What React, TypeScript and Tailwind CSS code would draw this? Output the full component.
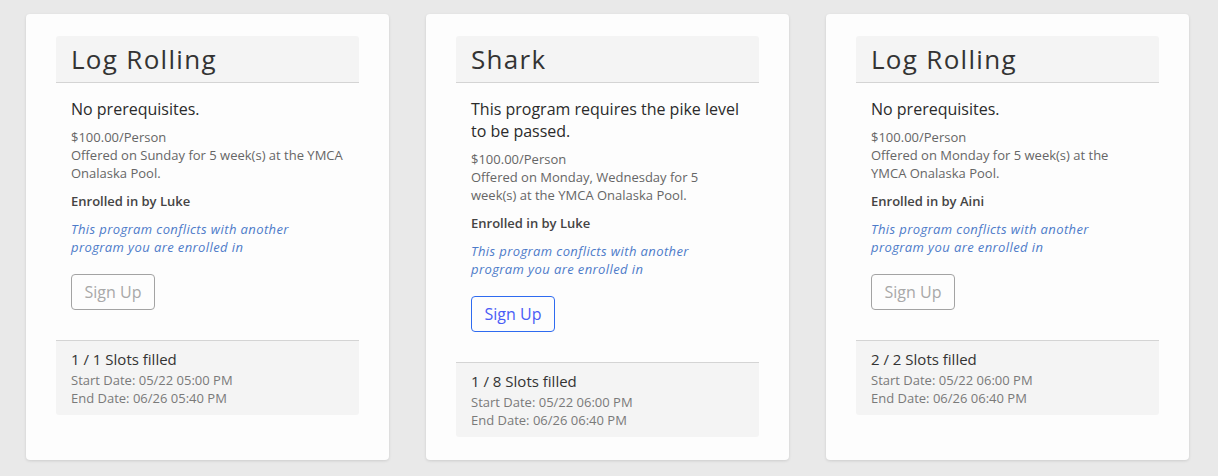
import React from "react";

interface Program {
  title: string;
  prereq: string[];
  days: string[];
  enrolledBy: string;
  slots: string;
  start: string;
  end: string;
  canSignUp: boolean;
}

const programs: Program[] = [
  {
    title: "Log Rolling",
    prereq: ["No prerequisites."],
    days: ["Offered on Sunday for 5 week(s) at the YMCA", "Onalaska Pool."],
    enrolledBy: "Luke",
    slots: "1 / 1 Slots filled",
    start: "05/22 05:00 PM",
    end: "06/26 05:40 PM",
    canSignUp: false,
  },
  {
    title: "Shark",
    prereq: ["This program requires the pike level", "to be passed."],
    days: ["Offered on Monday, Wednesday for 5", "week(s) at the YMCA Onalaska Pool."],
    enrolledBy: "Luke",
    slots: "1 / 8 Slots filled",
    start: "05/22 06:00 PM",
    end: "06/26 06:40 PM",
    canSignUp: true,
  },
  {
    title: "Log Rolling",
    prereq: ["No prerequisites."],
    days: ["Offered on Monday for 5 week(s) at the", "YMCA Onalaska Pool."],
    enrolledBy: "Aini",
    slots: "2 / 2 Slots filled",
    start: "05/22 06:00 PM",
    end: "06/26 06:40 PM",
    canSignUp: false,
  },
];

function ProgramCard({ p }: { p: Program }) {
  return (
    <div className="w-[363px] bg-[#fdfdfd] rounded-[4px] shadow-[0_1px_3px_rgba(0,0,0,0.12)] pt-[22px] pb-[24px] px-[30px]">
      <div className="bg-[#f4f4f4] border-b border-[#d4d4d4] h-[47px] px-[15px] flex items-center rounded-t-[3px]">
        <h2 className="text-[26px] leading-none text-[#333] tracking-[1.3px] -mt-[1px]">{p.title}</h2>
      </div>

      <div className="px-[15px] pt-[15px] pb-[30px]">
        <p className="text-[16px] leading-[22px] text-[#2b2b2b]">
          {p.prereq.map((l, i) => (
            <span key={i} className="block whitespace-nowrap">{l}</span>
          ))}
        </p>
        <div className="mt-[8px] text-[13px] leading-[18px] text-[#666]">
          <div>$100.00/Person</div>
          {p.days.map((l, i) => (
            <div key={i} className="whitespace-nowrap">{l}</div>
          ))}
        </div>
        <div className="mt-[10px] text-[13px] leading-[18px] font-semibold text-[#444]">
          Enrolled in by {p.enrolledBy}
        </div>
        <div className="mt-[10px] text-[13px] leading-[18px] italic text-[#4d7bc9] tracking-[0.4px]">
          <div className="whitespace-nowrap">This program conflicts with another</div>
          <div className="whitespace-nowrap">program you are enrolled in</div>
        </div>
        <button
          className={
            p.canSignUp
              ? "mt-[18px] h-[36px] w-[84px] rounded-[4px] border border-[#2f6bf0] text-[16px] text-[#4a5cf6]"
              : "mt-[18px] h-[36px] w-[84px] rounded-[4px] border border-[#a3a3a3] text-[16px] text-[#a8a8a8]"
          }
        >
          Sign Up
        </button>
      </div>

      <div className="bg-[#f4f4f4] border-t border-[#d4d4d4] px-[15px] pt-[8px] pb-[8px] rounded-b-[3px]">
        <div className="text-[15px] leading-[20px] text-[#333]">{p.slots}</div>
        <div className="mt-[2px] text-[13px] leading-[18px] text-[#7a7a7a]">
          <div>Start Date: {p.start}</div>
          <div>End Date: {p.end}</div>
        </div>
      </div>
    </div>
  );
}

export default function App() {
  return (
    <div
      className="w-[1218px] h-[476px] bg-[#e9e9e9] pl-[26px] pt-[14px] flex"
      style={{ fontFamily: '"Open Sans", "Liberation Sans", sans-serif' }}
    >
      <div className="flex gap-[37px] items-stretch h-[446px]">
        {programs.map((p, i) => (
          <ProgramCard key={i} p={p} />
        ))}
      </div>
    </div>
  );
}
